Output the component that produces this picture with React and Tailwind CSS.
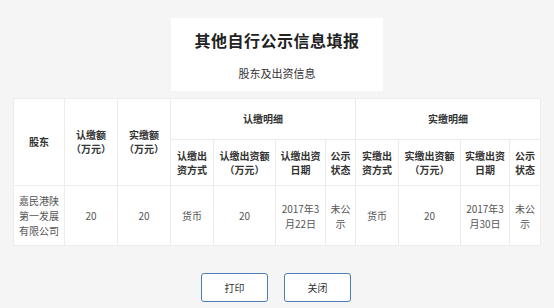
export default function App() {
  const th = "border border-[#ececec] px-[4px] font-bold text-[#333] text-center align-middle leading-[14px]";
  const td = "border border-[#ececec] px-[4px] text-[#555] text-center align-middle leading-[15px]";
  return (
    <div
      className="min-h-screen w-[554px] h-[308px] bg-[#f5f5f5] pt-[18px] text-[10px]"
      style={{ fontFamily: '"Noto Sans CJK SC", "Noto Sans", sans-serif' }}
    >
      <div className="mx-auto w-[212px] h-[73px] bg-white flex flex-col items-center">
        <div className="mt-[12px] text-[16px] leading-[20px] font-bold text-[#222] tracking-[0.5px]">
          其他自行公示信息填报
        </div>
        <div className="mt-[16px] text-[11px] leading-[14px] text-[#333]">股东及出资信息</div>
      </div>
      <div className="mt-[7px] ml-[13px] w-[527px] bg-white">
        <table className="w-[527px] table-fixed border-collapse">
          <colgroup>
            <col className="w-[51px]" />
            <col className="w-[53px]" />
            <col className="w-[53px]" />
            <col className="w-[43px]" />
            <col className="w-[62px]" />
            <col className="w-[50px]" />
            <col className="w-[30px]" />
            <col className="w-[43px]" />
            <col className="w-[62px]" />
            <col className="w-[49px]" />
            <col className="w-[31px]" />
          </colgroup>
          <thead>
            <tr className="h-[41px]">
              <th rowSpan={2} className={th}>股东</th>
              <th rowSpan={2} className={th}>认缴额<br />（万元）</th>
              <th rowSpan={2} className={th}>实缴额<br />（万元）</th>
              <th colSpan={4} className={th}>认缴明细</th>
              <th colSpan={4} className={th}>实缴明细</th>
            </tr>
            <tr className="h-[46px]">
              <th className={th}>认缴出<br />资方式</th>
              <th className={th}>认缴出资额<br />（万元）</th>
              <th className={th}>认缴出资<br />日期</th>
              <th className={th}>公示<br />状态</th>
              <th className={th}>实缴出<br />资方式</th>
              <th className={th}>实缴出资额<br />（万元）</th>
              <th className={th}>实缴出资<br />日期</th>
              <th className={th}>公示<br />状态</th>
            </tr>
          </thead>
          <tbody>
            <tr className="h-[60px]">
              <td className={td}>嘉民港陕<br />第一发展<br />有限公司</td>
              <td className={td}>20</td>
              <td className={td}>20</td>
              <td className={td}>货币</td>
              <td className={td}>20</td>
              <td className={td}>2017年3<br />月22日</td>
              <td className={td}>未公<br />示</td>
              <td className={td}>货币</td>
              <td className={td}>20</td>
              <td className={td}>2017年3<br />月30日</td>
              <td className={td}>未公<br />示</td>
            </tr>
          </tbody>
        </table>
      </div>
      <div className="mt-[27px] flex justify-center gap-[16px] pr-[2px]">
        <button className="w-[67px] h-[29px] bg-white border border-[#4d7db3] rounded-[3px] text-[10px] text-[#333]">
          打印
        </button>
        <button className="w-[67px] h-[29px] bg-white border border-[#4d7db3] rounded-[3px] text-[10px] text-[#333]">
          关闭
        </button>
      </div>
    </div>
  );
}
